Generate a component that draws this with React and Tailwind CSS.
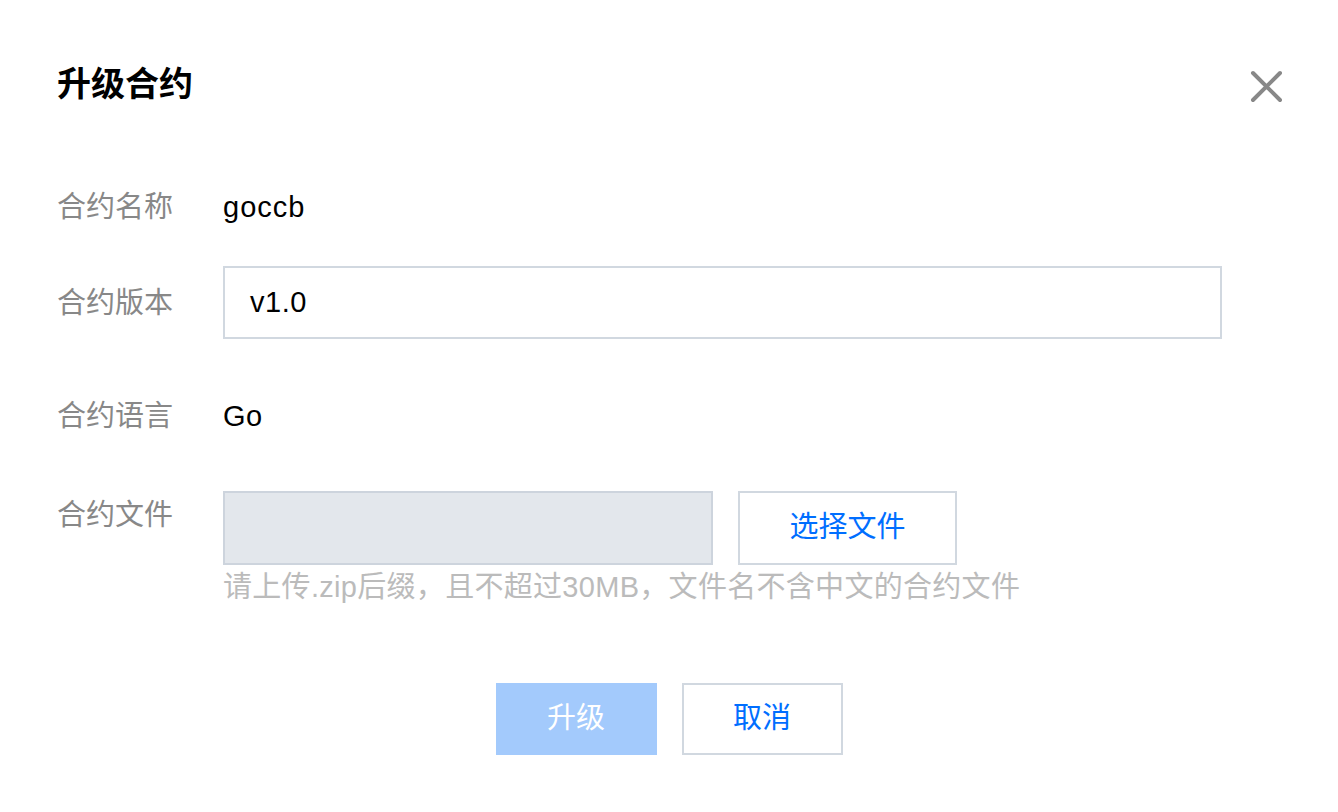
import React from 'react';

const font = { fontFamily: '"Liberation Sans", "Noto Sans CJK SC", sans-serif' };

function Row({ label, top = false, children, className = '' }){
  return (
    <div className={`flex ${top ? 'items-start' : 'items-center'} ${className}`}>
      <div className="w-[166px] shrink-0 text-[29px] leading-[48px] text-[#888]">{label}</div>
      <div className="flex-1">{children}</div>
    </div>
  );
}

export default function App(){
  return (
    <div className="w-[1338px] h-[812px] bg-white text-black relative" style={font}>
      <div className="pl-[57px] pr-[116px] pt-[60px]">
        <h1 className="text-[34px] leading-[48px] font-bold">升级合约</h1>

        <Row label="合约名称" className="mt-[75px]">
          <span className="text-[29px] leading-[48px] tracking-[1px]">goccb</span>
        </Row>

        <Row label="合约版本" className="mt-[35px]">
          <div className="h-[73px] border-2 border-[#d1d8e0] flex items-center pl-[25px] text-[29px] tracking-[0.5px]">v1.0</div>
        </Row>

        <Row label="合约语言" className="mt-[53px]">
          <span className="text-[29px] leading-[48px] tracking-[0.5px]">Go</span>
        </Row>

        <Row label="合约文件" top className="mt-[51px]">
          <div className="flex gap-[25px]">
            <div className="w-[490px] h-[74px] bg-[#e3e7ec] border-2 border-[#cdd4dd]"></div>
            <button className="w-[219px] h-[74px] border-2 border-[#d1d8e0] bg-white text-[#006eff] text-[29px]">选择文件</button>
          </div>
          <p className="mt-[2px] text-[29px] leading-[40px] tracking-[0.3px] text-[#bbb] whitespace-nowrap">请上传.zip后缀，且不超过30MB，文件名不含中文的合约文件</p>
        </Row>
      </div>

      <div className="flex justify-center gap-[25px] mt-[76px]">
        <button className="w-[161px] h-[72px] bg-[#a3cafc] text-white text-[29px]">升级</button>
        <button className="w-[161px] h-[72px] border-2 border-[#d1d8e0] bg-white text-[#006eff] text-[29px]">取消</button>
      </div>

      <button className="absolute left-[1250px] top-[70px] w-[33px] h-[33px] flex items-center justify-center" aria-label="close">
        <svg width="33" height="33" viewBox="0 0 33 33">
          <path d="M3 3 L30 30 M30 3 L3 30" stroke="#888" strokeWidth="4" strokeLinecap="round" />
        </svg>
      </button>
    </div>
  );
}
